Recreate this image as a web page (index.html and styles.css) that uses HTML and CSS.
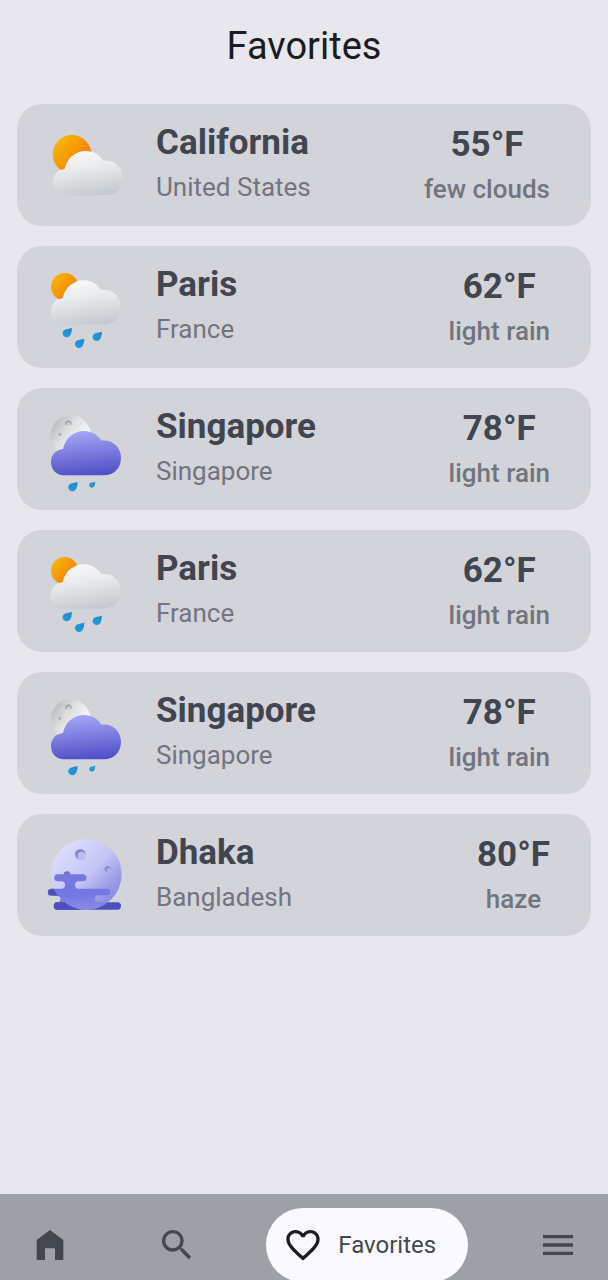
FILE: index.html
```html
<!DOCTYPE html>
<html lang="en">
<head>
<meta charset="utf-8">
<meta name="viewport" content="width=device-width, initial-scale=1">
<title>Favorites</title>
<link rel="stylesheet" href="styles.css">
</head>
<body>
<svg class="defs" aria-hidden="true">
  <defs>
    <linearGradient id="sun" x1="0" y1="0.1" x2="0.8" y2="0.8"><stop offset="0" stop-color="#f5bd09"/><stop offset="0.55" stop-color="#f79a05"/><stop offset="1" stop-color="#f07a05"/></linearGradient>
    <linearGradient id="white" x1="0.35" y1="0" x2="0.6" y2="1"><stop offset="0" stop-color="#fafafb"/><stop offset="0.45" stop-color="#e5e8ea"/><stop offset="1" stop-color="#c4cacf"/></linearGradient>
    <linearGradient id="violet" x1="0.4" y1="0" x2="0.55" y2="1"><stop offset="0" stop-color="#a5a7f4"/><stop offset="1" stop-color="#504fc8"/></linearGradient>
    <linearGradient id="gray" x1="0" y1="0.2" x2="0.7" y2="0.7"><stop offset="0" stop-color="#b5b8ba"/><stop offset="0.5" stop-color="#dcdedf"/><stop offset="1" stop-color="#f6f6f6"/></linearGradient>
    <linearGradient id="lilac" x1="0.15" y1="0.15" x2="0.85" y2="0.85"><stop offset="0" stop-color="#dcdcfd"/><stop offset="0.5" stop-color="#c5c6f5"/><stop offset="1" stop-color="#898be0"/></linearGradient>
    <linearGradient id="mist" x1="0" y1="0" x2="0" y2="1"><stop offset="0" stop-color="#7779e0"/><stop offset="0.6" stop-color="#7577e2"/><stop offset="1" stop-color="#8b8ce6"/></linearGradient>
    <linearGradient id="water" x1="1" y1="0" x2="0" y2="1"><stop offset="0" stop-color="#2a86c4"/><stop offset="1" stop-color="#16a0e6"/></linearGradient>
    <path id="cloud" d="M88 226C66 226 50 208 50 186C50 163 66 149 86 147C92 115 118 93 150 93C172 93 190 104 201 122C236 118 260 143 260 173C260 203 240 226 208 226Z"/>
    <path id="drop" d="M28 0C27 11 26 19 21 24C16 29 8 29 3 24C-2 19 -1 11 4 7C9 3 18 2 28 0Z"/>
    <g id="day-rain">
      <circle cx="86" cy="80" r="41" fill="url(#sun)"/>
      <use href="#cloud" x="-6" y="-32" fill="url(#white)"/>
      <g fill="url(#water)"><use href="#drop" x="80" y="204"/><use href="#drop" x="117" y="236"/><use href="#drop" x="170" y="215"/></g>
    </g>
    <g id="night-rain">
      <circle cx="104" cy="100" r="60" fill="url(#gray)"/>
      <path d="M89 71A10 10 0 1 1 106 70C101 65 94 65 89 71Z" fill="#a3a6aa"/>
      <circle cx="98" cy="67" r="6" fill="#ced0d2"/>
      <circle cx="71" cy="97" r="5" fill="#b0b3b6"/>
      <use href="#cloud" x="-5" y="-6" fill="url(#violet)"/>
      <use href="#drop" x="97" y="240" fill="url(#water)"/>
      <path d="M178 239C177 248 176 252 173 255C170 258 165 258 162 255C159 252 159 247 162 244C165 241 171 241 178 239Z" fill="#2c98c5"/>
    </g>
  </defs>
</svg>
<div class="app">
  <header class="header"><h1 class="title">Favorites</h1></header>
  <main class="main">
    <ul class="list">
      <li class="card">
        <svg class="weather" viewBox="0 -15 300 300" aria-hidden="true"><circle cx="108" cy="103" r="58" fill="url(#sun)"/><use href="#cloud" fill="url(#white)"/></svg>
        <div class="place"><h2 class="city">California</h2><p class="country">United States</p></div>
        <div class="reading"><p class="temp">55°F</p><p class="sky">few clouds</p></div>
      </li>
      <li class="card">
        <svg class="weather" viewBox="0 -9 300 300" aria-hidden="true"><use href="#day-rain"/></svg>
        <div class="place"><h2 class="city">Paris</h2><p class="country">France</p></div>
        <div class="reading"><p class="temp">62°F</p><p class="sky">light rain</p></div>
      </li>
      <li class="card">
        <svg class="weather" viewBox="0 -9 300 300" aria-hidden="true"><use href="#night-rain"/></svg>
        <div class="place"><h2 class="city">Singapore</h2><p class="country">Singapore</p></div>
        <div class="reading"><p class="temp">78°F</p><p class="sky">light rain</p></div>
      </li>
      <li class="card">
        <svg class="weather" viewBox="0 -9 300 300" aria-hidden="true"><use href="#day-rain"/></svg>
        <div class="place"><h2 class="city">Paris</h2><p class="country">France</p></div>
        <div class="reading"><p class="temp">62°F</p><p class="sky">light rain</p></div>
      </li>
      <li class="card">
        <svg class="weather" viewBox="0 -9 300 300" aria-hidden="true"><use href="#night-rain"/></svg>
        <div class="place"><h2 class="city">Singapore</h2><p class="country">Singapore</p></div>
        <div class="reading"><p class="temp">78°F</p><p class="sky">light rain</p></div>
      </li>
      <li class="card">
        <svg class="weather" viewBox="0 -4 300 300" aria-hidden="true">
          <path d="M64 228H244A11 11 0 0 1 244 250H64A11 11 0 0 1 64 228Z" fill="#4c50bd"/>
          <circle cx="151" cy="144" r="106" fill="url(#lilac)"/>
          <circle cx="133" cy="84" r="16" fill="#8486cd"/>
          <circle cx="137" cy="89" r="13" fill="#bcbdec"/>
          <circle cx="215" cy="129" r="9" fill="#8688d3"/>
          <circle cx="218" cy="132" r="7" fill="#adafe9"/>
          <circle cx="93" cy="145" r="10" fill="#7072ca"/>
          <path d="M65 144H141A10 10 0 0 1 141 165H128A11 11 0 0 0 128 187H213A10 10 0 0 1 213 207H184A11 11 0 0 0 184 228H216A106 106 0 0 1 86 228H66Q75 224 73 214Q70 208 56 207L48 187H76A11 11 0 0 0 76 165H65A10 10 0 0 1 65 144Z" fill="url(#mist)"/>
          <path d="M46 187H52Q58 196 66 208H46A10 10 0 0 1 46 187Z" fill="#4c50bd"/>
          <path d="M66 228H86Q108 246 134 250H64A11 11 0 0 1 66 228Z" fill="#4c50bd"/>
        </svg>
        <div class="place"><h2 class="city">Dhaka</h2><p class="country">Bangladesh</p></div>
        <div class="reading"><p class="temp">80°F</p><p class="sky">haze</p></div>
      </li>
    </ul>
  </main>
  <nav class="nav" aria-label="Main">
    <button class="tab" type="button" aria-label="Home"><svg class="icon" viewBox="0 0 24 24" aria-hidden="true"><path d="M4 21V9l8-6 8 6v12h-5v-7H9v7z"/></svg></button>
    <button class="tab" type="button" aria-label="Search"><svg class="icon" viewBox="0 0 24 24" aria-hidden="true"><path d="M15.500 14h-.79l-.28-.27A6.471 6.471 0 0 0 16 9.500 6.500 6.500 0 1 0 9.500 16c1.610 0 3.090-.59 4.230-1.570l.27.28v.79l5 4.990L20.490 19l-4.990-5zm-6 0C7.010 14 5 11.990 5 9.500S7.010 5 9.500 5 14 7.010 14 9.500 11.990 14 9.500 14z"/></svg></button>
    <button class="tab tab-active" type="button" aria-current="page"><svg class="icon" viewBox="0 0 24 24" aria-hidden="true"><path d="M16.500 3c-1.740 0-3.410.81-4.500 2.090C10.910 3.810 9.240 3 7.500 3 4.420 3 2 5.420 2 8.500c0 3.780 3.400 6.860 8.550 11.540L12 21.350l1.450-1.320C18.600 15.360 22 12.280 22 8.500 22 5.420 19.580 3 16.500 3zm-4.400 15.550l-.1.100-.1-.1C7.140 14.240 4 11.390 4 8.500 4 6.500 5.500 5 7.500 5c1.540 0 3.040.99 3.570 2.360h1.870C13.460 5.990 14.960 5 16.500 5c2 0 3.500 1.500 3.500 3.500 0 2.890-3.140 5.740-7.900 10.050z"/></svg><span>Favorites</span></button>
    <button class="tab" type="button" aria-label="Menu"><svg class="icon" viewBox="0 0 24 24" aria-hidden="true"><path d="M3 18h18v-2H3v2zm0-5h18v-2H3v2zm0-7v2h18V6H3z"/></svg></button>
  </nav>
</div>
</body>
</html>
```
FILE: styles.css
```css
* { box-sizing: border-box; }
body {
  margin: 0;
  background: #e7e7ed;
  color: #41454f;
  font-family: Roboto, "Liberation Sans", sans-serif;
}
h1, h2, p, ul { margin: 0; padding: 0; }
.defs { position: absolute; width: 0; height: 0; }
.app {
  display: flex;
  flex-direction: column;
  min-height: 100vh;
}
.header { padding: 24px 16px; text-align: center; }
.title {
  color: #1b1b20;
  font-size: 38px;
  font-weight: 400;
  line-height: 44px;
}
.main { flex: 1; padding: 12px 17px 24px; }
.list {
  display: flex;
  flex-direction: column;
  gap: 20px;
  list-style: none;
}
.card {
  display: flex;
  align-items: center;
  gap: 20px;
  min-height: 122px;
  padding: 0 41px 0 19px;
  border-radius: 25px;
  background: #d3d4da;
}
.weather { width: 100px; height: 100px; flex: none; }
.place { flex: 1; }
.reading { padding-top: 4px; text-align: center; }
.city, .temp {
  font-size: 35px;
  font-weight: 700;
  line-height: 44px;
}
.country, .sky {
  color: #72747f;
  font-size: 26px;
  line-height: 44px;
}
.sky { font-weight: 500; }
.nav {
  position: sticky;
  bottom: 0;
  display: flex;
  justify-content: space-between;
  align-items: flex-start;
  height: 86px;
  padding: 14px 13px 0;
  overflow: hidden;
  background: #9da0a7;
}
.tab {
  display: flex;
  align-items: center;
  gap: 15px;
  height: 74px;
  padding: 0 17px;
  border: 0;
  border-radius: 37px;
  background: none;
  color: #434750;
  font: inherit;
  font-size: 24px;
}
.tab-active { min-width: 202px; background: #faf9ff; }
.icon { width: 40px; height: 40px; fill: currentColor; }
.tab-active .icon { color: #1b1b20; }
```
